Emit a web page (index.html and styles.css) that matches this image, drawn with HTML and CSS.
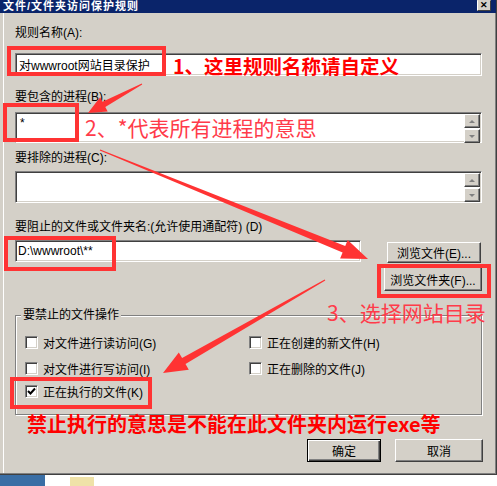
FILE: index.html
```html
<!DOCTYPE html>
<html lang="zh-CN">
<head>
<meta charset="UTF-8" />
<meta name="viewport" content="width=device-width, initial-scale=1" />
<title>文件/文件夹访问保护规则</title>
<link rel="stylesheet" href="styles.css">
</head>
<body>

<div class="dialog">
  <div class="titlebar">
    <span class="title">文件/文件夹访问保护规则</span>
    <span class="close">✕</span>
  </div>

  <div class="content">
    <div class="lbl l1">规则名称(A):</div>
    <div class="field f1">对wwwroot网站目录保护</div>

    <div class="lbl l2">要包含的进程(B):</div>
    <div class="field memo f2">
      <span class="memo-text">*</span>
      <div class="spin"><span class="sb up"></span><span class="sb down"></span></div>
    </div>

    <div class="lbl l3">要排除的进程(C):</div>
    <div class="field memo f3">
      <span class="memo-text"></span>
      <div class="spin"><span class="sb up"></span><span class="sb down"></span></div>
    </div>

    <div class="lbl l4">要阻止的文件或文件夹名:(允许使用通配符) (D)</div>
    <div class="path-row">
      <div class="field f4">D:\wwwroot\**</div>
      <button class="btn browse-file">浏览文件(E)...</button>
    </div>
    <button class="btn browse-folder">浏览文件夹(F)...</button>

    <fieldset class="ops">
      <legend>要禁止的文件操作</legend>
      <div class="ops-grid">
        <div class="opt"><span class="cb"></span>对文件进行读访问(G)</div>
        <div class="opt"><span class="cb"></span>正在创建的新文件(H)</div>
        <div class="opt"><span class="cb"></span>对文件进行写访问(I)</div>
        <div class="opt"><span class="cb"></span>正在删除的文件(J)</div>
        <div class="opt"><span class="cb checked"><svg width="9" height="9" viewBox="0 0 9 9"><path d="M1 4 L3.5 6.5 L8 1.5" fill="none" stroke="#000" stroke-width="2"/></svg></span>正在执行的文件(K)</div>
      </div>
    </fieldset>

    <div class="actions">
      <button class="btn default">确定</button>
      <button class="btn cancel">取消</button>
    </div>
  </div>

  <!-- annotations drawn over the dialog -->
  <div class="mark m1"></div>
  <div class="mark m2"></div>
  <div class="mark m3"></div>
  <div class="mark m4"></div>
  <div class="mark m5"></div>

  <div class="note n1">1、这里规则名称请自定义</div>
  <div class="note thin n2">2、*代表所有进程的意思</div>
  <div class="note thin n3">3、选择网站目录</div>
  <div class="note n4">禁止执行的意思是不能在此文件夹内运行exe等</div>

  <svg class="arrows" width="497" height="475" viewBox="0 0 497 475">
    <polygon points="141.8,83.6 102.5,101.7 100.1,97.3 88,113 107.7,111.5 105.3,107.1 142.2,84.4"/>
    <polygon points="99.8,150.5 342.6,252.4 340.1,258.5 368,259 347.7,239.9 345.2,246 100.2,149.5"/>
    <polygon points="324.7,279.6 182.1,358 178.8,352.4 163,373 188.8,369.7 185.5,364.1 325.3,280.4"/>
  </svg>
</div>

<div class="under">
  <div class="desk"></div>
  <div class="folder"></div>
</div>

</body>
</html>
```

FILE: styles.css
```css
body {
  margin: 0; background: #fff; color: #000;
  font-family: "Liberation Sans", "Noto Sans CJK SC", sans-serif; font-size: 12px;
}
.dialog {
  position: relative; width: 497px; height: 475px; box-sizing: border-box;
  background: #d4d0c8;
  border-right: 1px solid #404040; border-bottom: 1px solid #404040;
  box-shadow: inset -1px -1px #808080, inset 3px 0 #d4d0c8, inset 4px 0 #fff;
}
.titlebar {
  height: 13px; background: #0a246a;
  display: flex; justify-content: space-between; align-items: flex-start;
}
.title {
  color: #fff; font-weight: bold; font-size: 11px; line-height: 12px;
  letter-spacing: 1px; margin-left: 3px; white-space: nowrap;
}
.close {
  width: 14px; height: 11px; margin-right: 5px; box-sizing: border-box;
  background: #d4d0c8; border: 1px solid; border-color: #d4d0c8 #404040 #404040 #fff;
  font-size: 9px; line-height: 9px; text-align: center; font-weight: bold;
}
.content {
  padding: 0 14px 0 15px;
  display: flex; flex-direction: column;
}
.lbl { height: 14px; line-height: 14px; white-space: nowrap; }
.l1 { margin-top: 13px; }
.l2 { margin-top: 14px; }
.l3 { margin-top: 8px; }
.l4 { margin-top: 17px; }

.field {
  background: #fff; box-sizing: border-box;
  border: 1px solid; border-color: #808080 #fff #fff #808080;
  box-shadow: inset 1px 1px #404040, inset -1px -1px #d4d0c8;
  padding: 0 3px; display: flex; align-items: center; white-space: nowrap;
}
.f1 { margin-top: 13px; height: 23px; }
.memo { align-items: flex-start; padding: 0 0 0 4px; }
.f2 { margin-top: 8px; height: 31px; }
.f3 { margin-top: 6px; height: 32px; }
.memo-text { padding-top: 4px; line-height: 12px; }
.spin {
  margin-left: auto; margin-right: 1px; padding-top: 1px;
  display: flex; flex-direction: column; gap: 1px;
}
.sb {
  width: 16px; height: 14px; box-sizing: border-box;
  background: #d4d0c8; border: 1px solid; border-color: #fff #404040 #404040 #fff;
  box-shadow: inset -1px -1px #808080;
  display: flex; align-items: center; justify-content: center;
}
.sb::after {
  content: ""; width: 0; height: 0;
  border-left: 3px solid transparent; border-right: 3px solid transparent;
}
.sb.up::after { border-bottom: 3px solid #808080; }
.sb.down::after { border-top: 3px solid #808080; }

.path-row { display: flex; margin-top: 6px; }
.f4 { width: 346px; height: 22px; padding-left: 2px; }

.btn {
  font: inherit; color: #000; background: #d4d0c8; padding: 0;
  box-sizing: border-box; white-space: nowrap;
  border: 1px solid; border-color: #fff #404040 #404040 #fff;
  box-shadow: inset -1px -1px #808080;
}
.browse-file { width: 94px; height: 21px; margin: 2px 1px 0 auto; }
.browse-folder { width: 98px; height: 24px; margin-top: 4px; align-self: flex-end; }
.btn.default {
  border: 1px solid #000;
  box-shadow: inset 1px 1px #fff, inset -1px -1px #404040, inset -2px -2px #808080;
}

.ops {
  margin: 17px 0 0; padding: 0; height: 107px; box-sizing: border-box;
  border: 1px solid #808080;
  box-shadow: inset 1px 1px #fff, 1px 1px #fff;
}
.ops legend {
  margin-left: 5px; padding: 0 2px; line-height: 14px;
  background: #d4d0c8;
}
.ops-grid {
  margin-top: 14px; padding-left: 9px;
  display: grid; grid-template-columns: 224px 1fr;
  grid-template-rows: 26px 23px 14px; align-items: start;
}
.opt { display: flex; align-items: center; gap: 5px; height: 13px; white-space: nowrap; }
.cb {
  width: 13px; height: 13px; box-sizing: border-box; flex: none;
  background: #fff; border: 1px solid; border-color: #808080 #fff #fff #808080;
  box-shadow: inset 1px 1px #404040, inset -1px -1px #d4d0c8;
  display: flex; align-items: center; justify-content: center;
}

.actions { display: flex; justify-content: flex-end; gap: 14px; margin: 24px -1px 0 0; }
.actions .btn { height: 23px; }
.default { width: 74px; }
.cancel { width: 88px; }

/* red annotations */
.mark { position: absolute; border: 4px solid #f33; box-sizing: border-box; }
.m1 { left: 7px; top: 46px; width: 159px; height: 30px; }
.m2 { left: 3px; top: 103px; width: 76px; height: 39px; }
.m3 { left: 4px; top: 236px; width: 112px; height: 35px; }
.m4 { left: 377px; top: 264px; width: 114px; height: 34px; }
.m5 { left: 10px; top: 377px; width: 142px; height: 32px; }

.note {
  position: absolute; white-space: nowrap; color: #f00;
  font-family: "Noto Sans CJK SC", "Liberation Sans", sans-serif;
  font-size: 20px; line-height: 20px; font-weight: bold;
}
.note.thin { color: #ff3b4a; font-weight: normal; font-size: 21px; line-height: 21px; }
.n1 { left: 173px; top: 56px; font-size: 19.5px; }
.n2 { left: 85px; top: 117px; }
.n3 { left: 327px; top: 302px; }
.n4 { left: 27px; top: 414px; }

.arrows { position: absolute; left: 0; top: 0; pointer-events: none; }
.arrows polygon { fill: #f33; }

.under { height: 11px; display: flex; align-items: flex-start; }
.desk { width: 45px; height: 11px; background: #3a6ea5; }
.folder { width: 24px; height: 9px; margin: 2px 0 0 25px; background: #efe2a8; }
```
